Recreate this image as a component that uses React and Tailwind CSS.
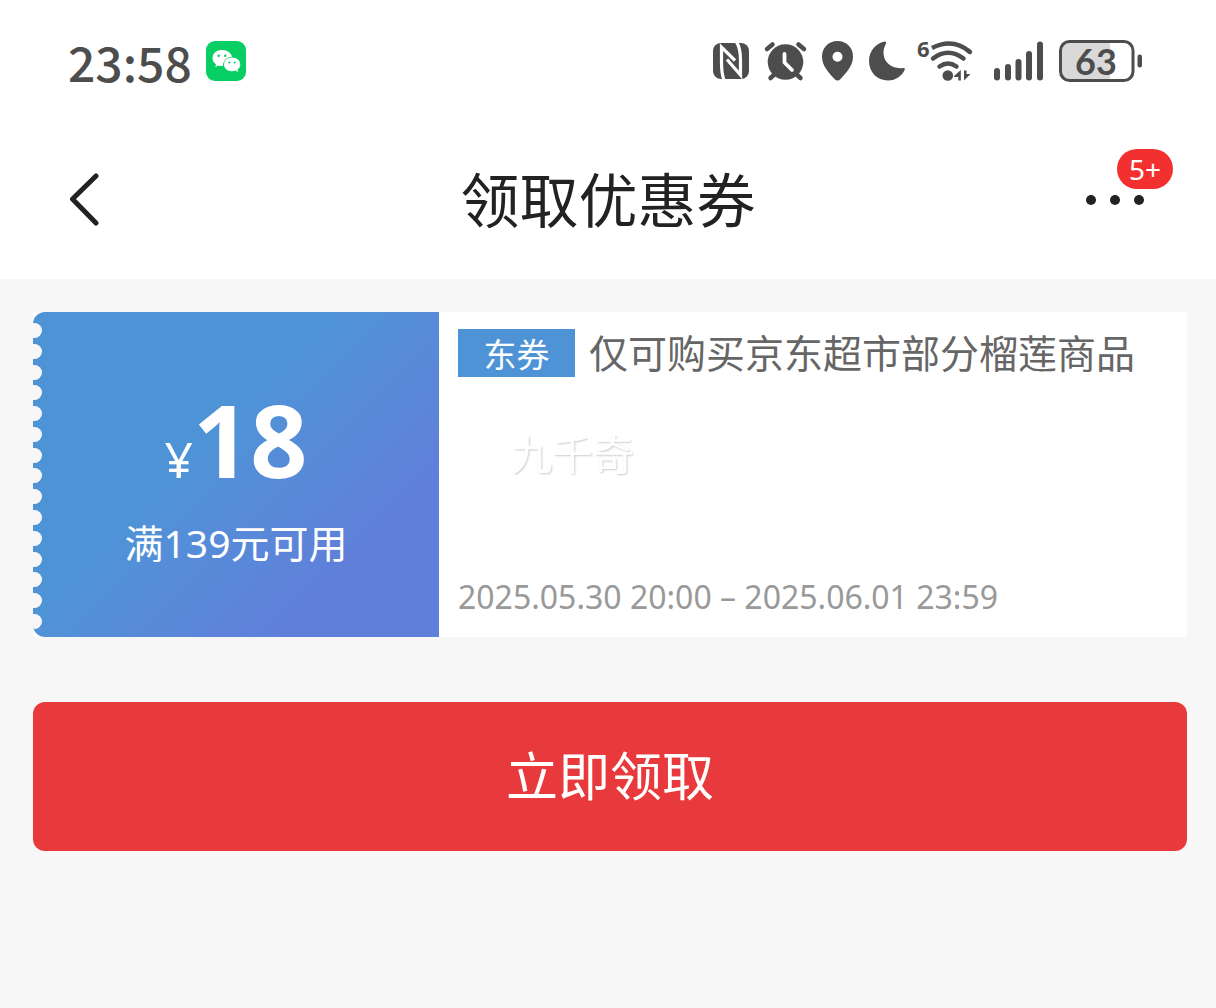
// クーポン受け取り画面

const StatusIcons = () => (
  <svg
    width="432"
    height="48"
    viewBox="712 38 432 48"
    fill="#4d4d4d"
    role="img"
    aria-label="状态栏"
    className="overflow-visible"
  >
    {/* NFC */}
    <rect x="713" y="43" width="36" height="36" rx="8" />
    <path
      d="M724 80C721.500 74 721.500 68 721.500 62V47L735 60.500M736.500 42C740.500 48 740.500 54 740.500 60V75L727 59.500"
      fill="none"
      stroke="#fff"
      strokeWidth="3.200"
    />
    {/* アラーム */}
    <circle cx="785.500" cy="62" r="17.800" />
    <path
      d="M767 49L772.500 44.500M804 49L798.500 44.500M770.500 78L776 73M800.500 78L795 73"
      fill="none"
      stroke="#4d4d4d"
      strokeWidth="4.500"
      strokeLinecap="round"
    />
    <path
      d="M784.500 54V62.500L792 70"
      fill="none"
      stroke="#fff"
      strokeWidth="3.800"
      strokeLinecap="round"
      strokeLinejoin="round"
    />
    {/* 位置情報 */}
    <path
      fillRule="evenodd"
      d="M837.500 41C828.500 41 822 47.500 822 56.500C822 66 829 73 834.500 79Q837.500 82 840.500 79C846 73 853 66 853 56.500C853 47.500 846.500 41 837.500 41ZM837.500 51.800A5 5 0 1 1 837.500 61.800A5 5 0 1 1 837.500 51.800Z"
    />
    {/* おやすみモード */}
    <path d="M885 41.500C876 43 869 51 869 61C869 72 877 80.500 888 80.500C896 80.500 902.500 75.500 904.800 69.500Q905.500 67.500 903 68C892 69.500 883 62 883.500 52C883.600 48.500 884.800 46 886 43.500Q886.600 41.500 885 41.500Z" />
    {/* Wi-Fi 6 */}
    <text x="917" y="57" fontSize="22" fontWeight="700" fontFamily="'Noto Sans', sans-serif">
      6
    </text>
    <g fill="none" stroke="#4d4d4d" strokeWidth="4.500">
      <path d="M932 48Q953 37.500 970 52" />
      <path d="M968 50.500L970 52" strokeLinecap="round" />
      <path d="M933 58.500Q948 47 963.500 58.500" strokeLinecap="round" />
      <path d="M939.500 66.500Q948 60.500 956.500 66.500" strokeLinecap="round" />
    </g>
    <circle cx="947.800" cy="75.500" r="5.300" />
    <path d="M954 76L960.800 70V80.500H958.300V77H954ZM964 70.500V80.500L970.500 74H966.500V70.500Z" />
    {/* 電波 */}
    <rect x="994" y="68" width="6" height="12.500" rx="3" />
    <rect x="1005" y="64" width="6" height="16.500" rx="3" />
    <rect x="1015.500" y="59" width="6" height="21.500" rx="3" />
    <rect x="1026" y="51" width="6" height="29.500" rx="3" />
    <rect x="1037" y="41.500" width="6" height="39" rx="3" />
    {/* バッテリー */}
    <path d="M1070 43H1110V79H1070Q1061 79 1061 70V52Q1061 43 1070 43Z" fill="#d9d9d9" />
    <rect x="1060.500" y="41.500" width="72.500" height="39" rx="9" fill="none" stroke="#4d4d4d" strokeWidth="3" />
    <rect x="1137.500" y="54.500" width="4.500" height="13" rx="2.200" />
    <text x="1096" y="75" textAnchor="middle" fontSize="36" fontWeight="700" fontFamily="Lato, sans-serif">
      63
    </text>
  </svg>
);

const WeChatIcon = () => (
  <svg width="40" height="40" viewBox="0 0 40 40" role="img" aria-label="微信">
    <rect width="40" height="40" rx="9" fill="#07cf63" />
    <path
      d="M16 9C10.500 9 6.500 12.500 6.500 17C6.500 19.500 7.800 21.700 10 23.200L9.300 26L12.500 24.400Q14.500 25 17 24.900C17 19.500 21 15.800 26 15.700C25 11.700 21 9 16 9Z"
      fill="#fff"
    />
    <path
      d="M26 16.500C21.300 16.500 18 19.700 18 23.500C18 27.500 21.500 30.200 26 30.200Q28 30.200 29.500 29.600L32.300 31L31.600 28.600C33.300 27.300 34.300 25.500 34.300 23.500C34.300 19.700 30.700 16.500 26 16.500Z"
      fill="#fff"
    />
    <g fill="#07cf63">
      <circle cx="12.700" cy="14.700" r="1.200" />
      <circle cx="19.300" cy="14.700" r="1.200" />
      <circle cx="23.400" cy="21.500" r="1.100" />
      <circle cx="28.800" cy="21.500" r="1.100" />
    </g>
  </svg>
);

const StatusBar = () => (
  <div className="flex items-center justify-between pt-[38px] pl-17 pr-18 text-[#4d4d4d]">
    <div className="flex items-start gap-3.5 pb-0.5">
      <span className="text-[48px] leading-10 font-medium font-['Noto_Sans_CJK_SC',sans-serif]">23:58</span>
      <WeChatIcon />
    </div>
    <StatusIcons />
  </div>
);

const NavBar = () => (
  <nav className="grid grid-cols-[1fr_auto_1fr] items-center px-17 pt-[72px] pb-[37px] text-[#222]">
    <button type="button" aria-label="返回" className="justify-self-start">
      <svg width="32" height="54" viewBox="0 0 32 54" fill="none" stroke="currentColor" strokeWidth="5">
        <path d="M28 3L4.500 26L28 50" strokeLinecap="round" strokeLinejoin="round" />
      </svg>
    </button>
    <h1 className="text-[59px] leading-[84px]">领取优惠券</h1>
    <button type="button" aria-label="更多" className="relative justify-self-end flex gap-3.5 py-4 pr-1">
      <span className="size-2.5 rounded-full bg-[#222]" />
      <span className="size-2.5 rounded-full bg-[#222]" />
      <span className="size-2.5 rounded-full bg-[#222]" />
      <span className="absolute -top-[30px] -right-[25px] flex h-10 w-14 items-center justify-center rounded-full bg-[#f23030] text-[28px] text-white">
        5+
      </span>
    </button>
  </nav>
);

const notches = Array.from({ length: 15 }, (_, i) => i);

const CouponCard = ({ amount, condition, type, title, period }) => (
  <section className="flex bg-white">
    <div className="relative flex w-[406px] shrink-0 flex-col items-center justify-center overflow-hidden rounded-l-xl bg-linear-135 from-[#4f93d7] from-42% to-[#607fda] to-78% pt-2.5 text-white">
      {/* 左端のギザギザ */}
      <div className="absolute inset-y-0 -left-2 flex flex-col justify-between pt-[11px] pb-2">
        {notches.map((n) => (
          <span key={n} className="h-[15px] w-[17px] rounded-full bg-[#f7f7f7]" />
        ))}
      </div>
      <p className="flex items-baseline leading-[100px]">
        <span className="text-[50px]">¥</span>
        <span className="text-[100px] font-bold">{amount}</span>
      </p>
      <p className="text-[39px] leading-[56px] mt-1.5">{condition}</p>
    </div>
    <div className="flex min-w-0 flex-1 flex-col px-[19px] pt-3.5 pb-4">
      <div className="flex items-center gap-3.5">
        <span className="flex h-12 w-[117px] items-center justify-center bg-[#4f93d7] pt-1 text-[33px] text-white">
          {type}
        </span>
        <h2 className="text-[39px] leading-[54px] text-[#666]">{title}</h2>
      </div>
      <p className="pt-[39px] pb-[84px] pl-[53px] text-[41px] leading-[70px] text-white [text-shadow:1px_1px_2px_#ccc]">
        九千奇
      </p>
      <p className="text-[32px] leading-12 text-[#999]">{period}</p>
    </div>
  </section>
);

export default function App() {
  return (
    <div className="min-h-screen bg-[#f7f7f7] font-['Noto_Sans','Noto_Sans_CJK_SC',sans-serif]">
      <header className="bg-white">
        <StatusBar />
        <NavBar />
      </header>
      <main className="flex flex-col gap-[65px] pt-[33px] pl-[33px] pr-[29px]">
        <CouponCard
          amount="18"
          condition="满139元可用"
          type="东券"
          title="仅可购买京东超市部分榴莲商品"
          period="2025.05.30 20:00 – 2025.06.01 23:59"
        />
        <button type="button" className="rounded-xl bg-[#e8393c] pt-[35px] pb-[37px] text-[52px] leading-[77px] text-white">
          立即领取
        </button>
      </main>
    </div>
  );
}
